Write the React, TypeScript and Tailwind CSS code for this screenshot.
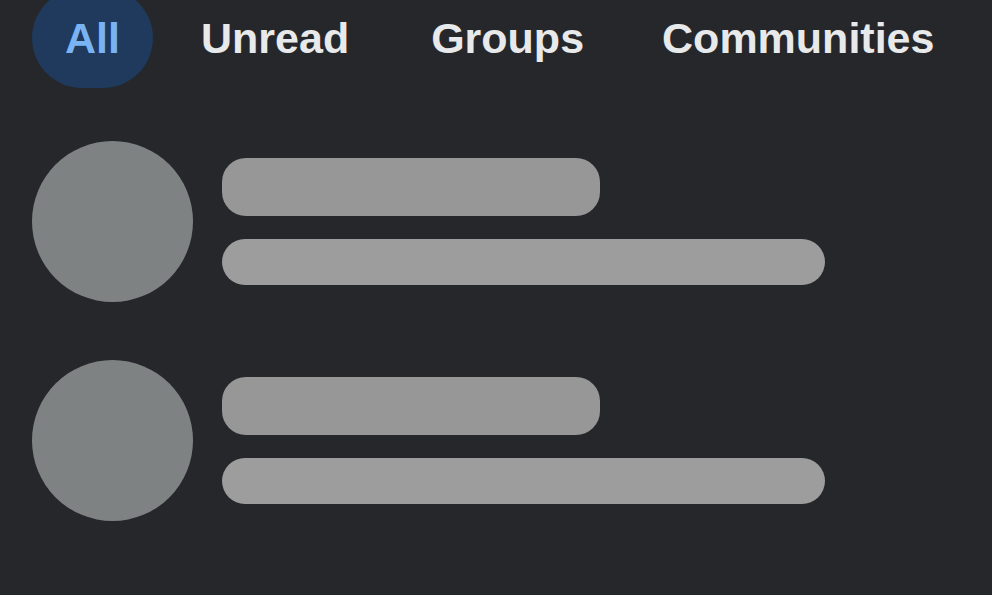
export default function App() {
  const rows = [0, 1];
  return (
    <div
      className="w-[992px] h-[595px] overflow-hidden bg-[#25272a]"
      style={{ fontFamily: '"Liberation Sans", Arial, sans-serif' }}
    >
      <div className="flex items-center gap-[14px] pl-[32px] mt-[-12px] h-[100px]">
        <div className="h-[100px] w-[121px] rounded-full bg-[#1f3a5c] flex items-center justify-center">
          <span className="text-[43px] leading-[43px] font-bold text-[#7ab3f3]">All</span>
        </div>
        <div className="px-[34px]">
          <span className="text-[43px] leading-[43px] font-bold text-[#e8e9eb]">Unread</span>
        </div>
        <div className="pl-[34px] pr-[30px]">
          <span className="text-[43px] leading-[43px] font-bold text-[#e8e9eb]">Groups</span>
        </div>
        <div className="px-[34px]">
          <span className="text-[43px] leading-[43px] font-bold text-[#e8e9eb]">Communities</span>
        </div>
      </div>
      <div className="flex flex-col gap-[58px] pl-[32px] mt-[53px]">
        {rows.map((r) => (
          <div key={r} className="flex items-start gap-[29px]">
            <div className="w-[161px] h-[161px] rounded-full bg-[#7e8283] shrink-0" />
            <div className="flex flex-col gap-[23px] pt-[17px]">
              <div className="w-[378px] h-[58px] rounded-[24px] bg-[#979797]" />
              <div className="w-[603px] h-[46px] rounded-full bg-[#9d9d9d]" />
            </div>
          </div>
        ))}
      </div>
    </div>
  );
}
